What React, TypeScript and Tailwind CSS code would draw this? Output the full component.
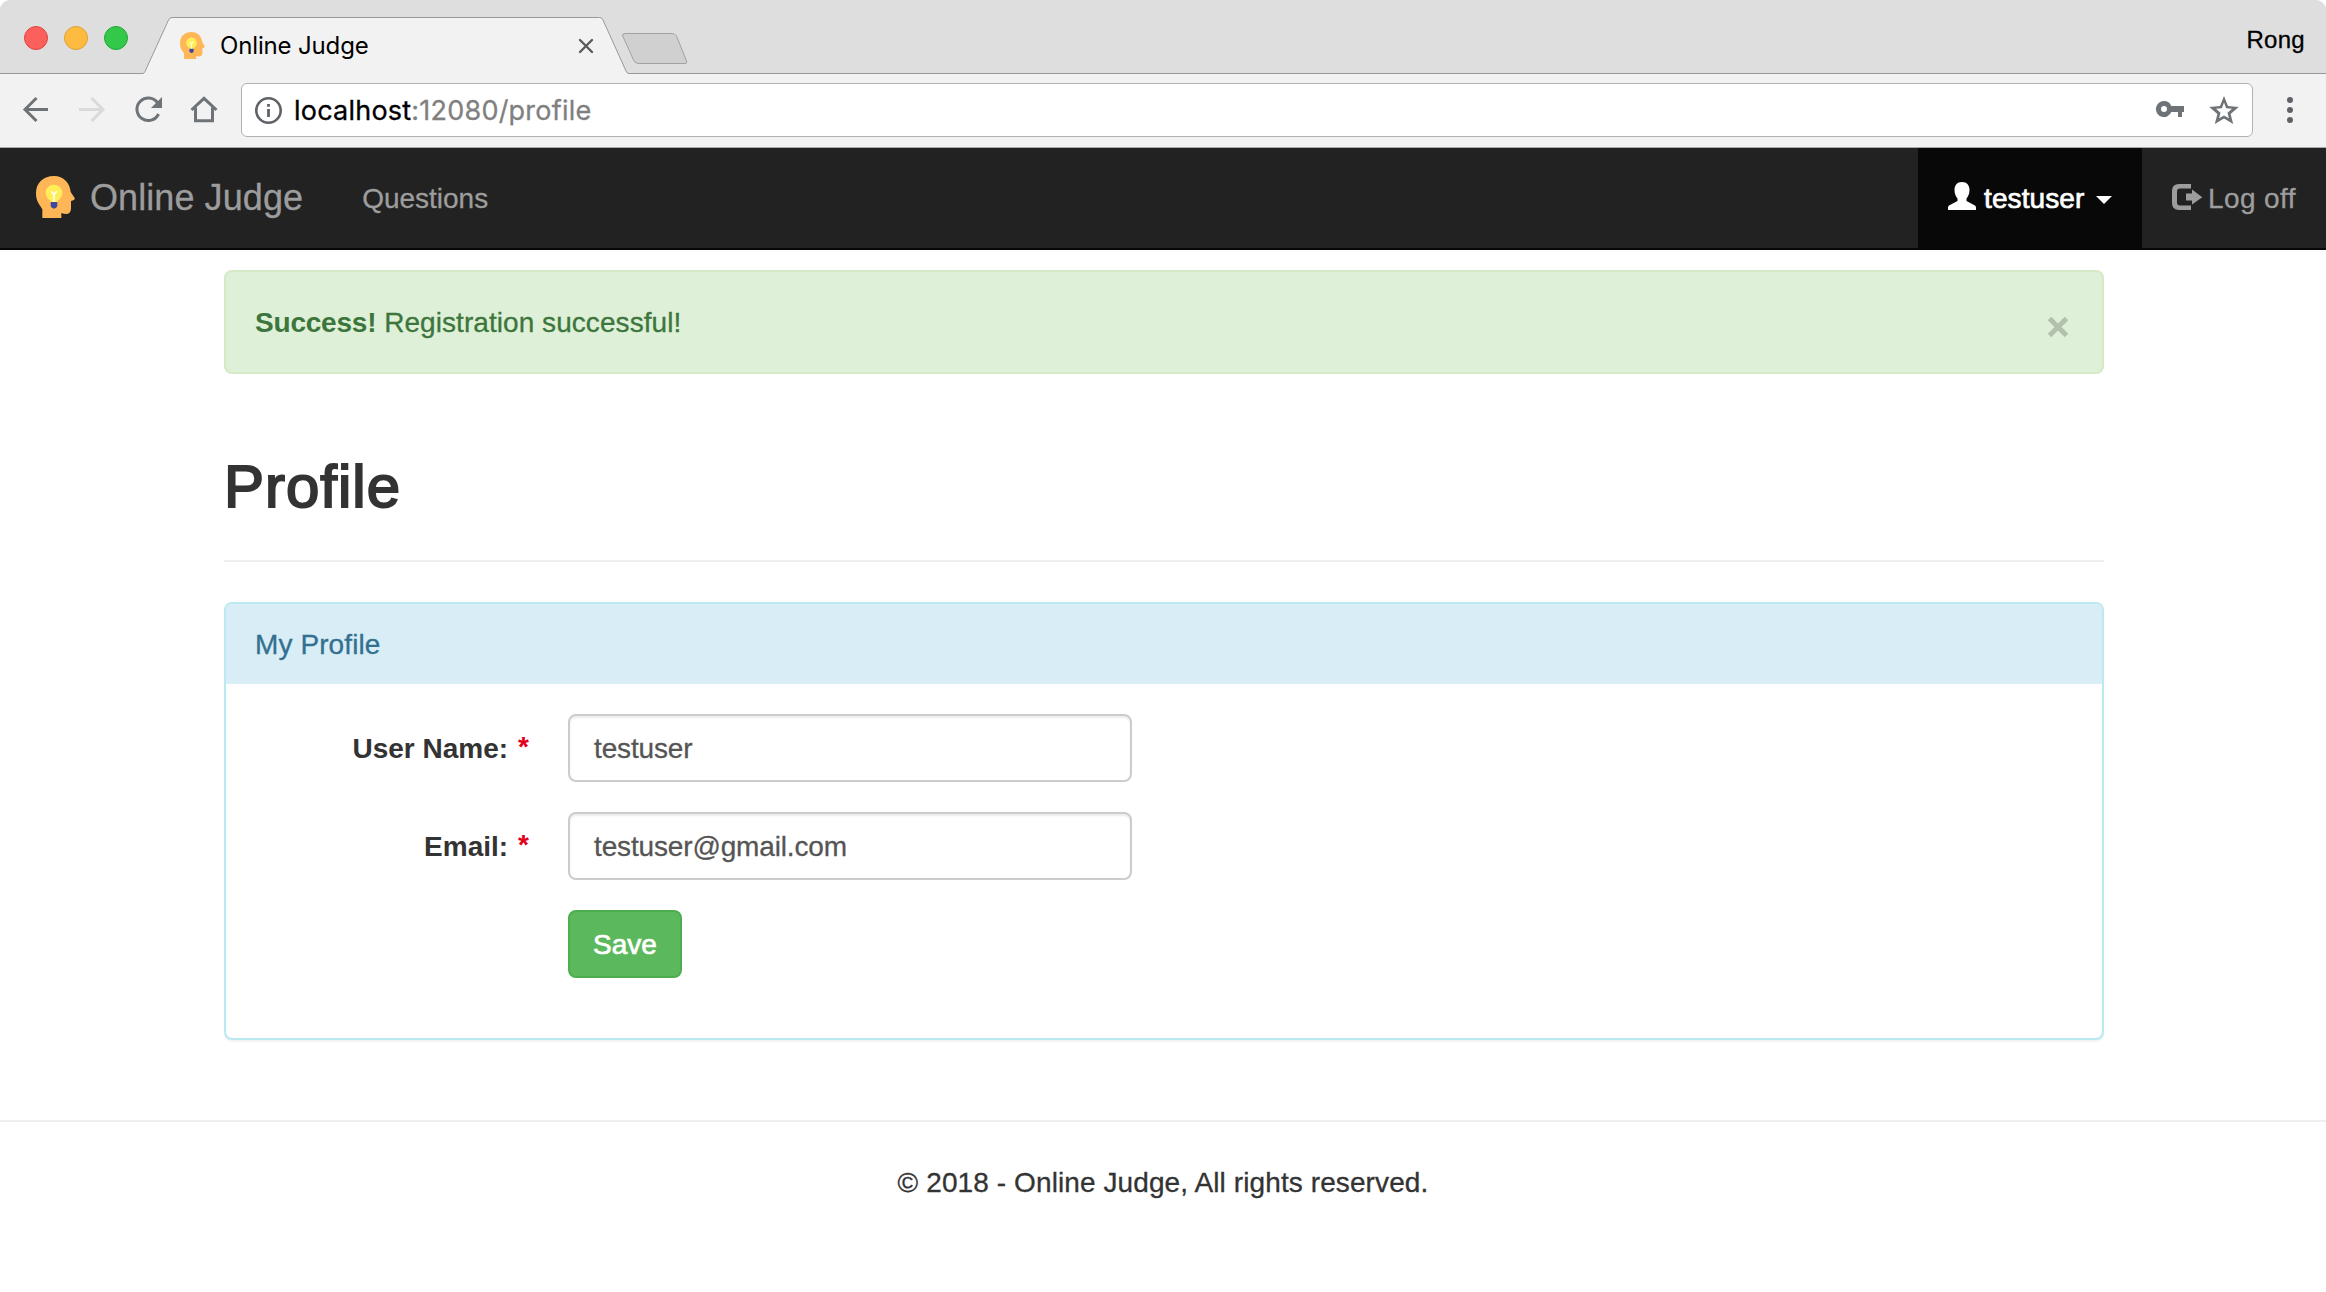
import React from "react";

function HeadLogo({ className }: { className: string }) {
  return (
    <svg className={className} viewBox="108 108 117 126" preserveAspectRatio="none">
      <path
        d="M127 234V208C122 197 108 188 108 160C108 128 130 108 162 108C191 108 210 129 212 156L224 174Q226 181 213 183V206Q212 222 198 222Q192 222 184 219V234Z"
        fill="#ffb656"
      />
      <circle cx="162" cy="159" r="25" fill="#ffee58" />
      <path d="M151 176H173V187H151Z" fill="#ffee58" />
      <path d="M162 187V164M162 164L154 154M162 164L170 154" stroke="#fffef2" strokeWidth="5" fill="none" />
      <path d="M152 186H172V198Q170 205 162 206Q154 205 152 198Z" fill="#3f4a9f" />
    </svg>
  );
}

function TabStrip() {
  return (
    <div className="flex h-[74px] items-start overflow-hidden rounded-t-[10px] bg-[#dedede] shadow-[inset_0_-1px_0_#999]">
      <div className="flex w-[143px] gap-4 pt-[26px] pl-6">
        <span className="size-6 rounded-full border border-[#e0443e] bg-[#fc605c]" />
        <span className="size-6 rounded-full border border-[#dea035] bg-[#fdbc40]" />
        <span className="size-6 rounded-full border border-[#1fa934] bg-[#34c84a]" />
      </div>
      <div className="relative h-[74px] w-[486px]">
        <svg className="absolute inset-0" width="486" height="74" viewBox="0 0 486 74">
          <path
            d="M0 73.5Q1.500 73 2 71.500L25.500 20Q27 17.500 29 17.500H456.500Q459 17.500 460 20L483 71Q484 73.500 486 73.500V74H0Z"
            fill="#f2f2f2"
          />
          <path
            d="M0 73.500Q1.500 73 2 71.500L25.500 20Q27 17.500 29 17.500H456.500Q459 17.500 460 20L483 71Q484 73.500 486 73.500"
            fill="none"
            stroke="#999"
          />
        </svg>
        <div className="relative flex h-[74px] items-center pt-[17px] pl-[37px]">
          <HeadLogo className="h-[27px] w-[25px]" />
          <span className="ml-[15px] w-[358px] font-['Inter'] text-[24px] leading-[28px] tracking-[-0.15px] text-black">
            Online Judge
          </span>
          <svg width="16" height="16" viewBox="0 0 16 16">
            <path d="M2 2L14 14M14 2L2 14" stroke="#5a5a5a" strokeWidth="2.400" strokeLinecap="round" />
          </svg>
        </div>
      </div>
      <svg className="mt-8 -ml-2" width="68" height="34" viewBox="0 0 68 34">
        <path
          d="M4 1.500H51Q54 1.500 55.500 4L65.500 29Q66.500 31.500 64 31.500H18Q14.500 31.500 13 29L1.700 4Q1 1.500 4 1.500Z"
          fill="#d0d0d0"
          stroke="#a2a2a2"
        />
      </svg>
      <span className="mt-[26px] mr-[21px] ml-auto text-[24px] leading-[28px] tracking-[0.3px] text-black [-webkit-text-stroke:0.3px_#000]">
        Rong
      </span>
    </div>
  );
}

function Toolbar() {
  return (
    <div className="flex h-[74px] items-center border-b border-[#a9a9a9] bg-[#f2f2f2] pb-px">
      <svg className="ml-[22px]" width="28" height="28" viewBox="0 0 28 28">
        <path d="M26 13.500H3M14.500 2L3 13.500L14.500 25" fill="none" stroke="#6e7377" strokeWidth="3" />
      </svg>
      <svg className="ml-7" width="28" height="28" viewBox="0 0 28 28">
        <path d="M1 13.500H25M13.500 2L25 13.500L13.500 25" fill="none" stroke="#d8dadb" strokeWidth="3" />
      </svg>
      <svg className="ml-7" width="30" height="28" viewBox="0 0 30 28">
        <path d="M24.500 18A11.300 11.300 0 1 1 23.300 6.500" fill="none" stroke="#6e7377" strokeWidth="3" />
        <path d="M28 1V12H17Z" fill="#6e7377" />
      </svg>
      <svg className="ml-[26px]" width="28" height="28" viewBox="0 0 28 28">
        <path d="M1.500 14L14 2.300L26.500 14M5.500 11.500V24.700H22.500V11.500" fill="none" stroke="#6e7377" strokeWidth="3" />
      </svg>
      <div className="ml-[23px] flex h-[54px] w-[2012px] items-center rounded-[6px] border border-[#b2b2b2] bg-white">
        <svg className="ml-[12px]" width="28" height="28" viewBox="0 0 28 28">
          <circle cx="14.5" cy="14.5" r="12.200" fill="none" stroke="#5f6368" strokeWidth="2.600" />
          <path d="M13.100 8H15.900V10.800H13.100ZM13.100 13H15.900V21H13.100Z" fill="#5f6368" />
        </svg>
        <span className="ml-3 pt-[2px] font-['Inter'] text-[27px] leading-[36px] tracking-[0.22px] text-[#808080] [-webkit-text-stroke:0.3px_#808080]">
          <span className="text-black [-webkit-text-stroke:0.3px_#000]">localhost</span>:12080/profile
        </span>
        <svg className="mr-[24px] ml-auto" width="30" height="18" viewBox="0 0 30 18">
          <path
            fillRule="evenodd"
            d="M9 0A8 8 0 1 0 16.300 11H23V16H27V11H29V5H16.300A8 8 0 0 0 9 0ZM9 5A3 3 0 1 1 9 11A3 3 0 0 1 9 5Z"
            fill="#6e7377"
          />
        </svg>
        <svg className="mr-[13px]" width="30" height="30" viewBox="0 0 30 30">
          <path
            fillRule="evenodd"
            d="M15 1L19 11L29.700 11.900L21.600 19L24.200 29L15 23.500L5.800 29L8.400 19L0.300 11.900L11 11ZM15 7.500L12.900 13.200L7 13.700L11.500 17.700L10.100 23.300L15 20.400L19.900 23.300L18.500 17.700L23 13.700L17.100 13.200Z"
            fill="#6e7377"
          />
        </svg>
      </div>
      <svg className="ml-[33px]" width="8" height="28" viewBox="0 0 8 28">
        <circle cx="4" cy="4" r="3" fill="#5f6368" />
        <circle cx="4" cy="14" r="3" fill="#5f6368" />
        <circle cx="4" cy="24" r="3" fill="#5f6368" />
      </svg>
    </div>
  );
}

function Navbar() {
  return (
    <nav className="flex h-[102px] border-b-2 border-[#080808] bg-[#222] leading-[40px] text-[#9d9d9d]">
      <a className="flex items-center pl-9">
        <HeadLogo className="-mt-[3px] h-[42px] w-[39px]" />
        <span className="ml-[15px] text-[36px] tracking-[0.08px] [-webkit-text-stroke:0.3px_#9d9d9d]">Online Judge</span>
      </a>
      <a className="ml-[59px] pt-[31px] [-webkit-text-stroke:0.3px_#9d9d9d]">Questions</a>
      <a className="ml-auto flex w-[224px] bg-[#080808] pt-[30px] pl-[30px] text-white">
        <svg className="mt-1" width="28" height="28" viewBox="0 0 28 28">
          <path
            d="M14 0C19 0 21.500 3.500 21.500 8C21.500 12 20 14.500 18.500 16.500V19L27 23.500Q28 24.300 28 25.500V28H0V25.500Q0 24.300 1 23.500L9.500 19V16.500C8 14.500 6.500 12 6.500 8C6.500 3.500 9 0 14 0Z"
            fill="#fff"
          />
        </svg>
        <span className="mt-px ml-2 w-[100px] tracking-[0.1px] [-webkit-text-stroke:0.7px_#fff]">testuser</span>
        <svg className="mt-[18px] ml-3" width="16" height="8" viewBox="0 0 16 8">
          <path d="M0 0H16L8 8Z" fill="#fff" />
        </svg>
      </a>
      <a className="flex w-[184px] pt-[30px] pl-[30px]">
        <svg className="mt-[6px]" width="31" height="26" viewBox="0 0 31 26">
          <path d="M19 0V4.500H8Q5 4.500 5 7.500V18.500Q5 21.500 8 21.500H19V26H7Q0 26 0 19V7Q0 0 7 0Z" fill="#9d9d9d" />
          <path d="M20 5.500L30.300 13.300L20 20.500V16.500H14V9.500H20Z" fill="#9d9d9d" />
        </svg>
        <span className="mt-px ml-[5px] tracking-[0.4px] [-webkit-text-stroke:0.3px_#9d9d9d]">Log off</span>
      </a>
    </nav>
  );
}

function Field({ label, value }: { label: string; value: string }) {
  return (
    <div className="mb-[30px] flex h-[68px]">
      <div className="flex w-[342px] justify-end gap-[10px] pt-[15px] pr-[39px] font-bold">
        <span>{label}</span>
        <span className="-mt-[2px] text-[#e2001a]">*</span>
      </div>
      <div className="flex h-[68px] w-[564px] items-center rounded-[8px] border-2 border-[#ccc] bg-white px-6 pt-px tracking-[-0.15px] text-[#555] shadow-[inset_0_2px_2px_rgba(0,0,0,0.075)] [-webkit-text-stroke:0.3px_#555]">
        {value}
      </div>
    </div>
  );
}

export default function App() {
  return (
    <div className="h-[1292px] w-[2326px] bg-white font-['Liberation_Sans',sans-serif] text-[28px] leading-[40px] text-[#333]">
      <TabStrip />
      <Toolbar />
      <Navbar />
      <main className="mt-5 ml-[224px] w-[1880px]">
        <div className="flex h-[104px] justify-between rounded-[8px] border-2 border-[#d6e9c6] bg-[#dff0d8] px-7 pt-[30px] text-[#3c763d]">
          <p className="pt-px pl-px">
            <b className="tracking-[-0.2px]">Success!</b>{" "}
            <span className="tracking-[0.06px] [-webkit-text-stroke:0.3px_#3c763d]">Registration successful!</span>
          </p>
          <svg className="mt-[14px] mr-[5px]" width="22" height="22" viewBox="0 0 22 22">
            <path d="M2.500 2.500L19.500 19.500M19.500 2.500L2.500 19.500" stroke="#b2c0ad" strokeWidth="5" />
          </svg>
        </div>
        <h1 className="mt-[80px] h-[108px] border-b-2 border-[#eee] text-[60px] leading-[66px] tracking-[1px] [-webkit-text-stroke:2px_#333]">
          Profile
        </h1>
        <section className="mt-10 h-[438px] rounded-[8px] border-2 border-[#bce8f1] bg-white shadow-[0_2px_2px_rgba(0,0,0,0.05)]">
          <h2 className="h-[80px] rounded-t-[6px] bg-[#d9edf7] px-[29px] pt-[21px] tracking-[0.1px] text-[#31708f] [-webkit-text-stroke:0.3px_#31708f]">
            My Profile
          </h2>
          <div className="pt-[30px]">
            <Field label="User Name:" value="testuser" />
            <Field label="Email:" value="testuser@gmail.com" />
            <button className="ml-[342px] flex h-[68px] w-[114px] items-center justify-center rounded-[8px] border-2 border-[#4cae4c] bg-[#5cb85c] pt-px text-white [-webkit-text-stroke:0.7px_#fff]">
              Save
            </button>
          </div>
        </section>
      </main>
      <footer className="mt-20 border-t-2 border-[#eee] pt-[41px] text-center tracking-[0.1px] [-webkit-text-stroke:0.3px_#333]">
        © 2018 - Online Judge, All rights reserved.
      </footer>
    </div>
  );
}
